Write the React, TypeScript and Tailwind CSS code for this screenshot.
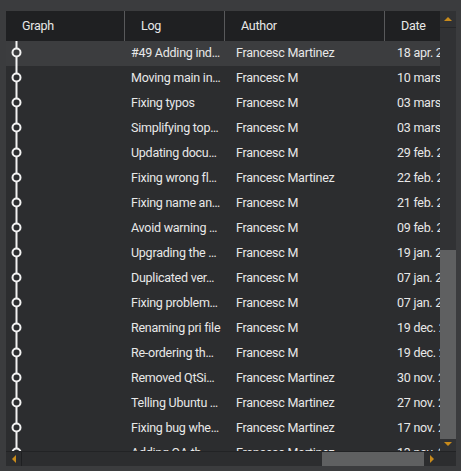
import React from 'react';

type Commit = { log: string; author: string; date: string };

const commits: Commit[] = [
  { log: '#49 Adding ind…', author: 'Francesc Martinez', date: '18 apr. 2020' },
  { log: 'Moving main in…', author: 'Francesc M', date: '10 mars 2020' },
  { log: 'Fixing typos', author: 'Francesc M', date: '03 mars 2020' },
  { log: 'Simplifying top…', author: 'Francesc M', date: '03 mars 2020' },
  { log: 'Updating docu…', author: 'Francesc M', date: '29 feb. 2020' },
  { log: 'Fixing wrong fl…', author: 'Francesc Martinez', date: '22 feb. 2020' },
  { log: 'Fixing name an…', author: 'Francesc M', date: '21 feb. 2020' },
  { log: 'Avoid warning …', author: 'Francesc M', date: '09 feb. 2020' },
  { log: 'Upgrading the …', author: 'Francesc M', date: '19 jan. 2020' },
  { log: 'Duplicated ver…', author: 'Francesc M', date: '07 jan. 2020' },
  { log: 'Fixing problem…', author: 'Francesc M', date: '07 jan. 2020' },
  { log: 'Renaming pri file', author: 'Francesc M', date: '19 dec. 2019' },
  { log: 'Re-ordering th…', author: 'Francesc M', date: '19 dec. 2019' },
  { log: 'Removed QtSi…', author: 'Francesc Martinez', date: '30 nov. 2019' },
  { log: 'Telling Ubuntu …', author: 'Francesc Martinez', date: '27 nov. 2019' },
  { log: 'Fixing bug whe…', author: 'Francesc Martinez', date: '17 nov. 2019' },
  { log: 'Adding QA th…', author: 'Francesc Martinez', date: '13 nov. 2019' },
];

// graph lane: straight line with a hollow commit dot
const GraphCell = () => (
  <svg width="119" height="25" className="block">
    <line x1="10.5" y1="0" x2="10.5" y2="7" stroke="#f2f2f2" strokeWidth="2" />
    <circle cx="10.5" cy="11.5" r="4" fill="none" stroke="#f2f2f2" strokeWidth="2" />
    <line x1="10.5" y1="16" x2="10.5" y2="25" stroke="#f2f2f2" strokeWidth="2" />
  </svg>
);

const Arrow = ({ dir }: { dir: 'up' | 'down' | 'left' | 'right' }) => {
  const pts = {
    up: '0,5 4,1 8,5',
    down: '0,1 4,5 8,1',
    left: '5,0 1,4 5,8',
    right: '1,0 5,4 1,8',
  }[dir];
  const size = dir === 'up' || dir === 'down' ? { w: 8, h: 6 } : { w: 6, h: 8 };
  return (
    <svg width={size.w} height={size.h}>
      <polygon points={pts} fill="#c98b1b" />
    </svg>
  );
};

const headers = [
  { label: 'Graph', w: 'w-[119px]', pl: 'pl-[16px]' },
  { label: 'Log', w: 'w-[100px]', pl: 'pl-[16px]' },
  { label: 'Author', w: 'w-[160px]', pl: 'pl-[16px]' },
  { label: 'Date', w: 'w-[55px]', pl: 'pl-[16px]' },
];

export default function App() {
  return (
    <div
      className="w-[461px] h-[471px] bg-[#3b3c3e] pl-[6px] pt-[11px] pr-[5px] pb-[5px] text-[12.5px] tracking-[-0.25px] text-[#e8e8e8]"
      style={{ fontFamily: 'Roboto, "Liberation Sans", sans-serif' }}
    >
      <div className="flex flex-col w-[450px] h-[455px]">
        <div className="flex h-[440px]">
          {/* table */}
          <div className="w-[434px] h-[440px] overflow-hidden bg-[#2c2d2f]">
            <div className="flex h-[30px] bg-[#1f2022]">
              {headers.map((h, i) => (
                <div
                  key={h.label}
                  className={`${h.w} ${h.pl} shrink-0 flex items-center ${i < headers.length - 1 ? 'border-r border-[#58595b]' : ''}`}
                >
                  {h.label}
                </div>
              ))}
            </div>
            {commits.map((c, i) => (
              <div key={i} className={`flex h-[25px] items-center ${i === 0 ? 'bg-[#3c3d3f]' : ''}`}>
                <div className="w-[119px] shrink-0">
                  <GraphCell />
                </div>
                <div className="w-[100px] shrink-0 pl-[6px] whitespace-nowrap overflow-hidden">{c.log}</div>
                <div className="w-[160px] shrink-0 pl-[11px] whitespace-nowrap overflow-hidden">{c.author}</div>
                <div className="w-[55px] shrink-0 pl-[12px] whitespace-nowrap overflow-hidden">{c.date}</div>
              </div>
            ))}
          </div>
          {/* vertical scrollbar */}
          <div className="w-[16px] flex flex-col bg-[#313234]">
            <div className="h-[17px] flex items-center justify-center border-b border-[#262729]">
              <Arrow dir="up" />
            </div>
            <div className="flex-1 flex flex-col">
              <div className="h-[222px]" />
              <div className="flex-1 bg-[#5f6061]" />
            </div>
            <div className="h-[12px] flex items-start justify-center pt-[2px]">
              <Arrow dir="down" />
            </div>
          </div>
        </div>
        {/* horizontal scrollbar */}
        <div className="flex h-[15px] border-t border-[#222325]">
          <div className="w-[434px] flex bg-[#2c2d2f]">
            <div className="w-[16px] flex items-center justify-center border-r border-[#1f2022]">
              <Arrow dir="left" />
            </div>
            <div className="w-[300px]" />
            <div className="flex-1 bg-[#5f6061]" />
            <div className="w-[16px] flex items-center justify-center">
              <Arrow dir="right" />
            </div>
          </div>
          <div className="w-[16px] bg-[#2c2d2f]" />
        </div>
      </div>
    </div>
  );
}
